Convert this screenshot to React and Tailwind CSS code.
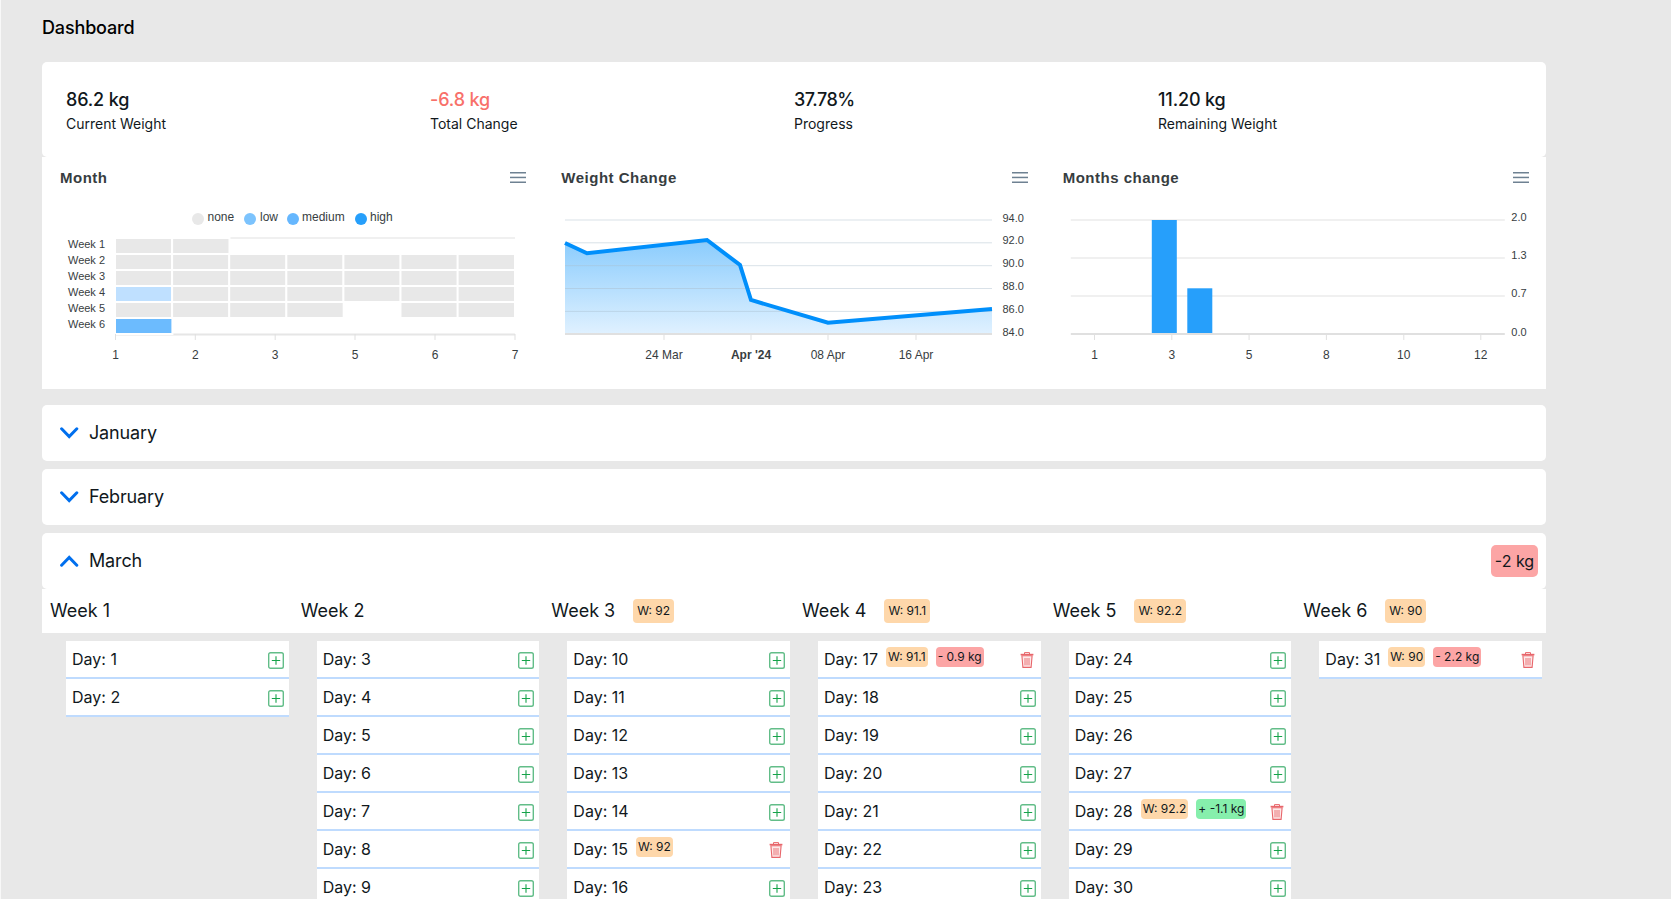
import React from "react";

const AX = "'Liberation Sans', Arial, sans-serif";

function Hamburger() {
  return (
    <svg width="16" height="12" viewBox="0 0 16 12" className="block mt-0.5">
      <rect x="0" y="0" width="16" height="1.5" fill="#6e8192" />
      <rect x="0" y="4.7" width="16" height="1.5" fill="#6e8192" />
      <rect x="0" y="9.5" width="16" height="1.5" fill="#6e8192" />
    </svg>
  );
}

function ChartCard({ title, x0, children }) {
  return (
    <div className="flex-1 min-w-0 h-[232px] flex flex-col">
      <div className="h-[43px] flex items-start justify-between pt-[13px] pl-[18px] pr-[17px]">
        <span className="font-['Liberation_Sans'] font-bold text-[15px] tracking-[0.5px] leading-4 text-[#373d3f]">{title}</span>
        <Hamburger />
      </div>
      <svg width="501.33" height="189" viewBox={`${x0} 200 501.33 189`} className="block" style={{ fontFamily: AX }}>
        {children}
      </svg>
    </div>
  );
}

function Txt({ x, y, size = 12, fill = "#373d3f", anchor = "middle", weight, children }) {
  return (
    <text x={x} y={y} fontSize={size} fill={fill} textAnchor={anchor} fontWeight={weight} dominantBaseline="central">
      {children}
    </text>
  );
}

const heatRows = [
  ["n", "n", "", "", "", "", ""],
  ["n", "n", "n", "n", "n", "n", "n"],
  ["n", "n", "n", "n", "n", "n", "n"],
  ["l", "n", "n", "n", "n", "n", "n"],
  ["n", "n", "n", "n", "", "n", "n"],
  ["m", "", "", "", "", "", ""],
];
const heatFill = { n: "#e8e8e8", l: "#bfe0ff", m: "#6cbbfe" };

function Heatmap() {
  return (
    <>
      {[
        [198, "#e8e8e8", 207.5, "none"],
        [250, "#7cc3fd", 260, "low"],
        [293, "#66b7fe", 302, "medium"],
        [361, "#269ffb", 370, "high"],
      ].map(([cx, fill, tx, t]) => (
        <g key={t}>
          <circle cx={cx} cy={219} r={6} fill={fill} />
          <Txt x={tx} y={217} anchor="start">{t}</Txt>
        </g>
      ))}
      <line x1="115.5" y1="238" x2="515" y2="238" stroke="#f0f0f0" strokeWidth="2" />
      <line x1="115.5" y1="334.5" x2="515" y2="334.5" stroke="#e6e6e6" strokeWidth="2" />
      {heatRows.map((row, r) => (
        <g key={r}>
          <Txt x={68} y={244.5 + r * 16} size={11} anchor="start">{`Week ${r + 1}`}</Txt>
          {row.map((c, i) =>
            c ? (
              <rect
                key={i}
                x={115 + i * 57.1}
                y={238 + r * 16}
                width={57.4}
                height={16}
                fill={heatFill[c]}
                stroke="#ffffff"
                strokeWidth="2"
              />
            ) : null
          )}
        </g>
      ))}
      {[
        [115.5, "1"],
        [195.3, "2"],
        [275.2, "3"],
        [355, "5"],
        [435, "6"],
        [515, "7"],
      ].map(([x, t]) => (
        <g key={x}>
          <line x1={x} y1="334" x2={x} y2="340" stroke="#e0e0e0" />
          <Txt x={x} y={355}>{t}</Txt>
        </g>
      ))}
    </>
  );
}

function AreaChart() {
  const pts = "565,243 587,253.3 707,240 740,265 751,300 828,322.7 992,309";
  return (
    <>
      <defs>
        <linearGradient id="areaGrad" x1="0" y1="0" x2="0" y2="1">
          <stop offset="0" stopColor="#8accfd" />
          <stop offset="1" stopColor="#e0f1ff" />
        </linearGradient>
      </defs>
      <polygon points={`${pts} 992,334 565,334`} fill="url(#areaGrad)" />
      {[220, 242.8, 265.7, 288.5, 311.4].map((y) => (
        <line key={y} x1="565" y1={y} x2="992" y2={y} stroke="#a9bccb" strokeOpacity="0.45" />
      ))}
      <line x1="565" y1="334" x2="992" y2="334" stroke="#e0e0e0" strokeWidth="2" />
      <polyline points={pts} fill="none" stroke="#008ffb" strokeWidth="4" strokeLinejoin="miter" />
      {[
        [664, "24 Mar"],
        [751, "Apr '24", 700],
        [828, "08 Apr"],
        [916, "16 Apr"],
      ].map(([x, t, w]) => (
        <g key={t}>
          <line x1={x} y1="334" x2={x} y2="340" stroke="#e0e0e0" />
          <Txt x={x} y={355} weight={w}>{t}</Txt>
        </g>
      ))}
      {[
        [218, "94.0"],
        [240, "92.0"],
        [263, "90.0"],
        [286, "88.0"],
        [309, "86.0"],
        [332, "84.0"],
      ].map(([y, t]) => (
        <Txt key={t} x={1002.5} y={y} size={11} anchor="start">{t}</Txt>
      ))}
    </>
  );
}

function BarChart() {
  return (
    <>
      {[220, 258, 296].map((y) => (
        <line key={y} x1="1071" y1={y} x2="1505" y2={y} stroke="#f0f0f0" strokeWidth="2" />
      ))}
      <rect x="1152" y="220" width="25" height="114" fill="#269ffb" />
      <rect x="1187.5" y="288.3" width="25" height="45.7" fill="#269ffb" />
      <line x1="1071" y1="334" x2="1505" y2="334" stroke="#e0e0e0" strokeWidth="2" />
      {[
        [1094.7, "1"],
        [1172, "3"],
        [1249.3, "5"],
        [1326.6, "8"],
        [1404, "10"],
        [1481, "12"],
      ].map(([x, t]) => (
        <g key={t}>
          <line x1={x} y1="334" x2={x} y2="340" stroke="#e0e0e0" />
          <Txt x={x} y={355}>{t}</Txt>
        </g>
      ))}
      {[
        [217, "2.0"],
        [255, "1.3"],
        [293, "0.7"],
        [332, "0.0"],
      ].map(([y, t]) => (
        <Txt key={t} x={1511.5} y={y} size={11} anchor="start">{t}</Txt>
      ))}
    </>
  );
}

function Chevron({ up }) {
  return (
    <svg width="20" height="12" viewBox="0 0 20 12" className="block" fill="none">
      <path
        d={up ? "M2.6 10.2 L10.2 2.5 L17.8 10.2" : "M2.6 1.8 L10.2 9.5 L17.8 1.8"}
        stroke="#006fee"
        strokeWidth="3"
        strokeLinecap="round"
      />
    </svg>
  );
}

function Accordion({ label, up, children }) {
  return (
    <div className="h-14 bg-white rounded-[5px] flex items-center pl-[17px] pr-2">
      <Chevron up={up} />
      <span className="ml-2.5 text-lg leading-7 tracking-[-0.15px] text-[#11181c]">{label}</span>
      {children}
    </div>
  );
}

function PlusIcon() {
  return (
    <svg width="16" height="17" viewBox="0 0 16 17" className="block" fill="none">
      <rect x="0.7" y="0.7" width="14.6" height="15.6" rx="1.8" stroke="#62bd88" strokeWidth="1.4" />
      <path d="M8 4.3V12.7M3.8 8.5H12.2" stroke="#16a34a" strokeWidth="1.1" />
    </svg>
  );
}

function TrashIcon() {
  return (
    <svg width="14" height="16" viewBox="0 0 14 16" className="block" fill="none">
      <path d="M4.5 2V0.6H9.5V2" stroke="#e8666b" strokeWidth="1" />
      <path d="M0.6 2.6H13.4" stroke="#e8666b" strokeWidth="1.6" />
      <path d="M1.9 3.8L2.9 15.4H11.1L12.1 3.8Z" fill="#fdeaea" stroke="#e8666b" strokeWidth="1.1" />
      <path d="M5 6V13.4M7 6V13.4M9 6V13.4" stroke="#e8666b" strokeWidth="0.9" />
    </svg>
  );
}

function Badge({ className, children }) {
  return (
    <span className={`h-5 px-0.5 rounded-[4px] text-xs leading-5 ml-2 text-[#11181c] whitespace-nowrap ${className}`}>
      {children}
    </span>
  );
}

function DayRow({ day, w, delta, good }) {
  return (
    <div className="h-[38px] bg-white border-b-2 border-[#bfdbfe] flex items-start pt-1.5 pl-1.5 pr-[5px]">
      <span className="text-base leading-6 text-[#11181c] whitespace-nowrap">Day: {day}</span>
      {w && <Badge className="bg-[#fed7aa]">W: {w}</Badge>}
      {delta && <Badge className={good ? "bg-[#86efac]" : "bg-[#fca5a5]"}>{delta}</Badge>}
      <span className={w ? "ml-auto mt-[5px] mr-0.5" : "ml-auto mt-[5px]"}>{w ? <TrashIcon /> : <PlusIcon />}</span>
    </div>
  );
}

const weeks = [
  { n: 1, days: [{ d: 1 }, { d: 2 }] },
  { n: 2, days: [3, 4, 5, 6, 7, 8, 9].map((d) => ({ d })) },
  { n: 3, w: "92", days: [{ d: 10 }, { d: 11 }, { d: 12 }, { d: 13 }, { d: 14 }, { d: 15, w: "92" }, { d: 16 }] },
  { n: 4, w: "91.1", days: [{ d: 17, w: "91.1", delta: "- 0.9 kg" }, { d: 18 }, { d: 19 }, { d: 20 }, { d: 21 }, { d: 22 }, { d: 23 }] },
  { n: 5, w: "92.2", days: [{ d: 24 }, { d: 25 }, { d: 26 }, { d: 27 }, { d: 28, w: "92.2", delta: "+ -1.1 kg", good: true }, { d: 29 }, { d: 30 }] },
  { n: 6, w: "90", days: [{ d: 31, w: "90", delta: "- 2.2 kg" }] },
];

const stats = [
  ["86.2 kg", "Current Weight", "text-[#11181c] tracking-[-0.15px]"],
  ["-6.8 kg", "Total Change", "text-[#f8706a] tracking-[-0.15px]"],
  ["37.78%", "Progress", "text-[#11181c] tracking-[-0.5px]"],
  ["11.20 kg", "Remaining Weight", "text-[#11181c] tracking-[-0.15px]"],
];

export default function App() {
  return (
    <div className="h-[899px] overflow-hidden bg-[#e8e8e8] border-l border-[#f8f8f8] font-['Inter',sans-serif]">
      <div className="ml-[41px] w-[1504px]">
        <h1 className="pt-[14px] h-[62px] text-lg leading-7 font-medium tracking-[-0.15px] text-black">Dashboard</h1>

        <div className="bg-white rounded-[5px] h-[95px] px-6 pt-6 grid grid-cols-4">
          {stats.map(([v, l, c]) => (
            <div key={l}>
              <div className={`text-lg leading-7 font-medium ${c}`}>{v}</div>
              <div className="text-sm leading-5 text-[#11181c]">{l}</div>
            </div>
          ))}
        </div>
        <div className="bg-white flex">
          <ChartCard title="Month" x0={42}><Heatmap /></ChartCard>
          <ChartCard title="Weight Change" x0={543}><AreaChart /></ChartCard>
          <ChartCard title="Months change" x0={1045.2}><BarChart /></ChartCard>
        </div>

        <div className="mt-4 flex flex-col gap-2">
          <Accordion label="January" />
          <Accordion label="February" />
          <Accordion label="March" up>
            <span className="ml-auto h-8 w-[47px] rounded-[5px] bg-[#fca5a5] text-base leading-8 text-center text-[#11181c]">-2 kg</span>
          </Accordion>
        </div>
        <div className="h-11 bg-white flex">
          {weeks.map((wk) => (
            <div key={wk.n} className="flex-1 min-w-0 flex items-center pl-2">
              <span className="text-lg leading-7 text-[#11181c]">Week {wk.n}</span>
              {wk.w && (
                <span className="ml-[18px] h-6 px-1 rounded-[4px] bg-[#fed7aa] text-xs leading-6 text-[#11181c]">W: {wk.w}</span>
              )}
            </div>
          ))}
        </div>
        <div className="mt-2 flex">
          {weeks.map((wk) => (
            <div key={wk.n} className="flex-1 min-w-0 pl-6 pr-1">
              {wk.days.map((x) => (
                <DayRow key={x.d} day={x.d} w={x.w} delta={x.delta} good={x.good} />
              ))}
            </div>
          ))}
        </div>
      </div>
    </div>
  );
}
